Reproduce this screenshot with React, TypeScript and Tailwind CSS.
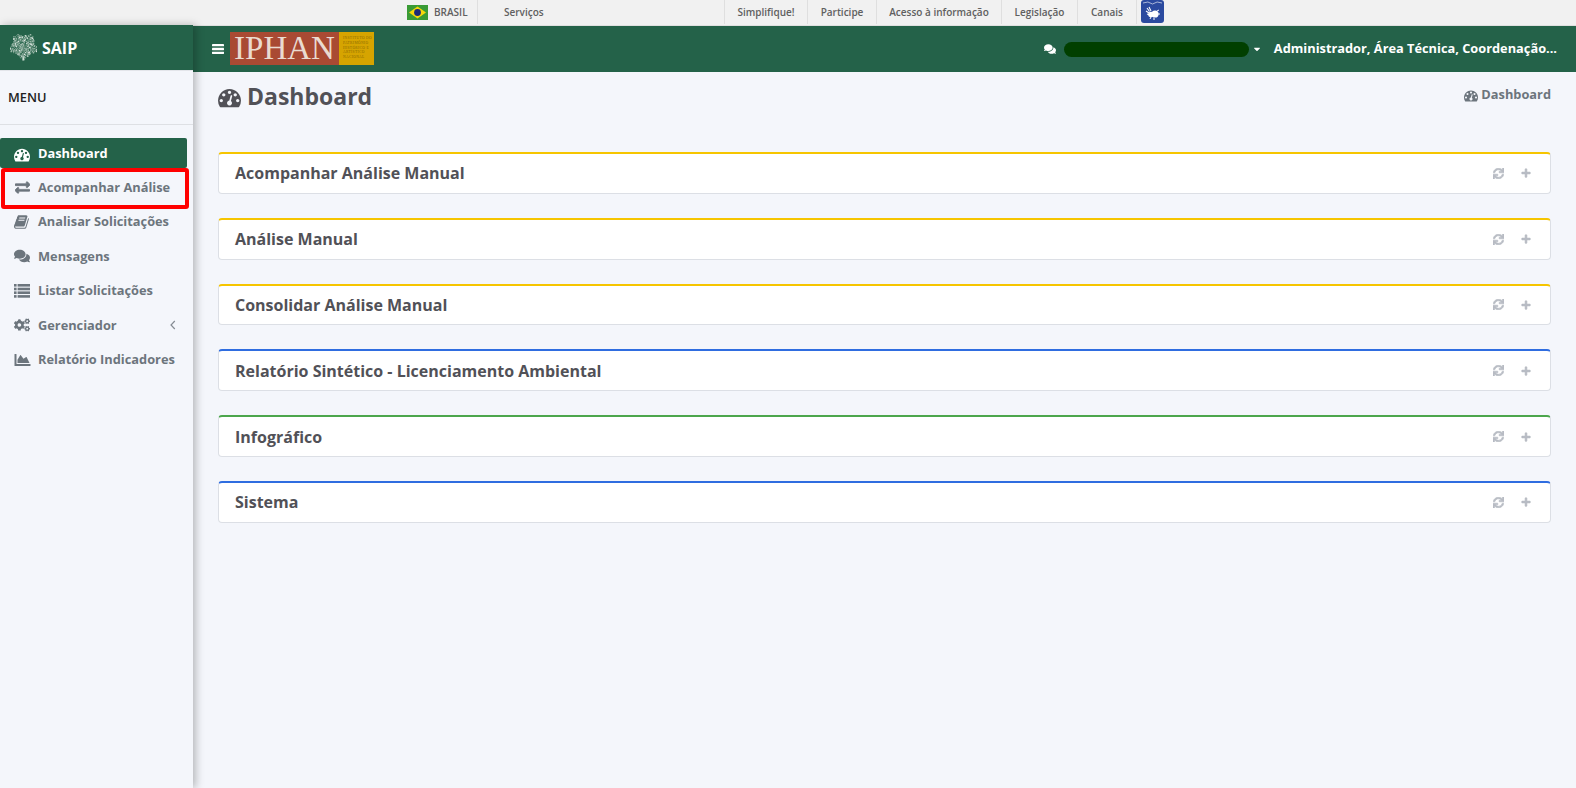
import { FaExchangeAlt, FaComments, FaCogs, FaChartArea, FaSync, FaPlus, FaCaretDown } from "react-icons/fa";

const gaugePath = "M384 1216q0-53-37.5-90.5t-90.5-37.5-90.5 37.5-37.5 90.5 37.5 90.5 90.5 37.5 90.5-37.5 37.5-90.5zm192-448q0-53-37.5-90.5t-90.5-37.5-90.5 37.5-37.5 90.5 37.5 90.5 90.5 37.5 90.5-37.5 37.5-90.5zm428 481l101-382q6-26-7.5-48.5t-38.5-29.5-48 6.5-30 39.5l-101 382q-60 5-107 43.5t-63 98.5q-20 77 20 146t117 89 146-20 89-117q16-60-6-117t-72-91zm660-33q0-53-37.5-90.5t-90.5-37.5-90.5 37.5-37.5 90.5 37.5 90.5 90.5 37.5 90.5-37.5 37.5-90.5zm-640-640q0-53-37.5-90.5t-90.5-37.5-90.5 37.5-37.5 90.5 37.5 90.5 90.5 37.5 90.5-37.5 37.5-90.5zm448 192q0-53-37.5-90.5t-90.5-37.5-90.5 37.5-37.5 90.5 37.5 90.5 90.5 37.5 90.5-37.5 37.5-90.5zm320 448q0 261-141 483-19 29-54 29h-1402q-35 0-54-29-141-221-141-483 0-182 71-348t191-286 286-191 348-71 348 71 286 191 191 286 71 348z";
const bookPath = "M1639 478q40 57 18 129l-275 906q-19 64-76.5 107.5t-122.5 43.5h-923q-77 0-148.5-53.5t-99.5-131.5q-24-67-2-127 0-4 3-27t4-37q1-8-3-21.5t-3-19.5q2-11 8-21t16.5-23.5 16.5-23.5q23-38 45-91.5t30-91.5q3-10 .5-30t-.5-28q3-11 17-28t17-23q21-36 42-92t25-90q1-9-2.5-32t.5-28q4-13 22-30.5t22-22.5q19-26 42.5-84.5t27.5-96.5q1-8-3-25.5t-2-26.5q2-8 9-18t18-23 17-21q8-12 16.5-30.5t15-35 16-36 19.5-32 26.5-23.5 36-11.5 47.5 5.5l-1 3q38-9 51-9h761q74 0 114 56t18 130l-274 906q-36 119-71.5 153.5t-128.5 34.5h-869q-27 0-38 15-11 16-1 43 24 70 144 70h923q29 0 56-15.5t35-41.5l300-987q7-22 5-57 38 15 59 43zm-1064 2q-4 13 2 22.5t20 9.5h608q13 0 25.5-9.5t16.5-22.5l21-64q4-13-2-22.5t-20-9.5h-608q-13 0-25.5 9.5t-16.5 22.5zm-83 256q-4 13 2 22.5t20 9.5h608q13 0 25.5-9.5t16.5-22.5l21-64q4-13-2-22.5t-20-9.5h-608q-13 0-25.5 9.5t-16.5 22.5z";

function Gauge({ className }: { className: string }) {
  return (
    <svg viewBox="0 0 1792 1792" className={className} fill="currentColor">
      <path d={gaugePath} />
    </svg>
  );
}

function BookIcon({ className }: { className?: string }) {
  return (
    <svg viewBox="0 0 1792 1792" className={className} fill="currentColor">
      <path d={bookPath} />
    </svg>
  );
}

function ListIcon({ className }: { className?: string }) {
  return (
    <svg viewBox="0 0 16 14" className={className} fill="currentColor">
      {[0, 3.7, 7.4, 11.1].map((y) => (
        <g key={y}>
          <rect x="0" y={y} width="2.6" height="2.6" />
          <rect x="3.6" y={y} width="12.4" height="2.6" />
        </g>
      ))}
    </svg>
  );
}

function BarsIcon({ className }: { className?: string }) {
  return (
    <svg viewBox="0 0 12 10" className={className} fill="currentColor">
      <rect x="0" y="0" width="12" height="2.3" rx="0.4" />
      <rect x="0" y="3.85" width="12" height="2.3" rx="0.4" />
      <rect x="0" y="7.7" width="12" height="2.3" rx="0.4" />
    </svg>
  );
}

function AngleIcon({ className }: { className?: string }) {
  return (
    <svg viewBox="0 0 6 10" className={className} fill="none" stroke="currentColor" strokeWidth="1.2">
      <path d="M4.8 1 L1 5 L4.8 9" />
    </svg>
  );
}

function Exchange({ className }: { className?: string }) {
  return <FaExchangeAlt className={`${className} [stroke-width:25]`} />;
}
function Comments({ className }: { className?: string }) {
  return <FaComments className={className} />;
}
function Cogs({ className }: { className?: string }) {
  return <FaCogs className={className} />;
}
function Area({ className }: { className?: string }) {
  return <FaChartArea className={className} />;
}

const speckles: [number, number, number][] = Array.from({ length: 210 }, (_, i) => {
  const a = i * 2.39996;
  const wobble = 1 + 0.14 * Math.sin(a * 5);
  const r = Math.sqrt(i / 210) * 12 * wobble;
  return [13.5 + Math.cos(a) * r * 1.08, 12 + Math.sin(a) * r * 0.98, 0.45 + ((i * 7) % 5) * 0.13];
});

function TreeLogo() {
  return (
    <svg viewBox="0 0 27 27" className="h-[27px] w-[27px]">
      {speckles.map(([x, y, r], i) => (
        <circle key={i} cx={x} cy={y} r={r} fill={i % 3 === 0 ? "#eef4f0" : "#a7c1b3"} opacity={i % 4 === 0 ? 0.6 : 0.9} />
      ))}
      <path d="M12.3 26.5 L13 19 L14.4 26.5 Z" fill="#cfdfd6" />
      <path d="M13.2 22 L13.5 13 M13.3 17 L8 11 M13.4 15 L19 9" stroke="#5f8a76" strokeWidth="0.8" fill="none" />
    </svg>
  );
}

const govLinks = [
  { label: "Simplifique!", w: "w-[83px]" },
  { label: "Participe", w: "w-[69px]" },
  { label: "Acesso à informação", w: "w-[125px]" },
  { label: "Legislação", w: "w-[76px]" },
  { label: "Canais", w: "w-[59px]" },
];

const nav = [
  { label: "Acompanhar Análise", Icon: Exchange, size: "h-[15px] w-[15px]" },
  { label: "Analisar Solicitações", Icon: BookIcon, size: "h-[16px] w-[16px]" },
  { label: "Mensagens", Icon: Comments, size: "h-[16px] w-[16px]" },
  { label: "Listar Solicitações", Icon: ListIcon, size: "h-[14px] w-[16px]" },
  { label: "Gerenciador", Icon: Cogs, size: "h-[16px] w-[16px]", arrow: true },
  { label: "Relatório Indicadores", Icon: Area, size: "h-[16px] w-[17px]" },
];

const cards = [
  { title: "Acompanhar Análise Manual", color: "border-t-[#f6c500]" },
  { title: "Análise Manual", color: "border-t-[#f6c500]" },
  { title: "Consolidar Análise Manual", color: "border-t-[#f6c500]" },
  { title: "Relatório Sintético - Licenciamento Ambiental", color: "border-t-[#2f6de0]" },
  { title: "Infográfico", color: "border-t-[#4ca64c]" },
  { title: "Sistema", color: "border-t-[#2f6de0]" },
];

export default function App() {
  return (
    <div className="relative h-[788px] w-[1576px] overflow-hidden bg-[#f4f6fb] font-['Open_Sans',sans-serif]">
      {/* Government bar */}
      <div className="flex h-[26px] items-start border-b border-[#e0e0e0] bg-[#f1f1f1] pl-[407px] text-[10px] font-semibold text-[#606060]">
        <div className="flex h-6 w-[71px] items-center gap-[6px] border-r border-[#dfdfdf]">
          <svg viewBox="0 0 21 15" className="h-[15px] w-[21px]">
            <rect width="21" height="15" fill="#3a9b35" />
            <polygon points="10.5,1.5 19,7.5 10.5,13.5 2,7.5" fill="#f7d80a" />
            <circle cx="10.5" cy="7.5" r="3.4" fill="#1d2a78" />
          </svg>
          <span>BRASIL</span>
        </div>
        <div className="flex h-6 w-[247px] items-center border-r border-[#dfdfdf] pl-[26px]">Serviços</div>
        {govLinks.map((l) => (
          <div key={l.label} className={`flex h-6 items-center justify-center border-r border-[#dfdfdf] ${l.w}`}>
            {l.label}
          </div>
        ))}
        <div className="ml-1 flex h-[23px] w-[23px] items-center justify-center rounded-[3px] bg-[#2b4a9f]">
          <svg viewBox="0 0 23 23" className="h-[23px] w-[23px]" fill="none" stroke="#fff">
            <path d="M2 3 Q7 0.5 11.5 4 Q16 0.5 21 3" strokeWidth="0.6" />
            <path d="M6 8 l2.5 3.5 M8 7 l2 4 M5 11 l3 2 M6 14 l3 1" strokeWidth="1.1" />
            <circle cx="14" cy="14" r="3.6" fill="#fff" stroke="none" />
            <circle cx="10" cy="14.5" r="2.8" fill="#fff" stroke="none" />
            <path d="M16 11 l2 -1 M17 14 l2 0 M13 18 l0 2 M10 17 l-1 2" strokeWidth="1" />
          </svg>
        </div>
      </div>

      <div className="flex">
        {/* Sidebar */}
        <aside className="relative z-10 -mt-px h-[763px] w-[193px] shrink-0 bg-[#f4f6fb] shadow-[3px_0_8px_rgba(0,0,0,0.25)]">
          <div className="flex h-[46px] items-center gap-[5px] border-b border-[#e3e5ea] bg-[#246249] pl-[10px] text-white">
            <TreeLogo />
            <span className="text-[16px] font-bold">SAIP</span>
          </div>
          <div className="flex h-[54px] items-center border-b border-[#dee0e4] pl-2 text-[12.8px] font-semibold text-[#222]">MENU</div>
          <nav className="pt-[13px]">
            <div className="mr-[6px] flex h-[30px] items-center rounded-[2px] bg-[#246249] pl-[14px] pt-[1px] text-[12.8px] font-bold text-white">
              <Gauge className="mr-2 h-[16px] w-[16px]" />
              Dashboard
            </div>
            <div className="pt-[2.5px]">
              {nav.map(({ label, Icon, size, arrow }) => (
                <div key={label} className="relative flex h-[34.4px] items-center pl-[14px] text-[12.8px] font-bold text-[#6c757d]">
                  <span className="mr-[8px] flex w-[16px] justify-center">
                    <Icon className={`shrink-0 ${size}`} />
                  </span>
                  <span>{label}</span>
                  {arrow && <AngleIcon className="absolute right-[17px] top-[12px] h-[10px] w-[6px] text-[#868c94]" />}
                </div>
              ))}
            </div>
          </nav>
          <div className="absolute left-[1px] top-[143px] h-[41px] w-[188px] rounded-[3px] border-[4px] border-[#ff0000]" />
        </aside>

        <div className="min-w-0 flex-1">
          {/* Navbar */}
          <header className="flex h-[46px] items-center bg-[#246249] text-white">
            <BarsIcon className="ml-[19px] h-[10px] w-[12px]" />
            <div className="ml-[6px] flex h-[33px] w-[144px] -translate-y-[1px]">
              <div className="flex w-[109px] items-center justify-center bg-[#a94a33] font-['Liberation_Serif',serif] text-[33px] leading-none text-[#eadbd0]">IPHAN</div>
              <div className="flex w-[35px] flex-col justify-center bg-[#d6a400] pl-[4px] font-['Liberation_Serif',serif] text-[3.6px] uppercase leading-[4.8px] tracking-[0.35px] text-[#8a6a00]">
                <span>Instituto do</span>
                <span>Patrimônio</span>
                <span>Histórico e</span>
                <span>Artístico</span>
                <span>Nacional</span>
              </div>
            </div>
            <div className="ml-auto flex items-center">
              <FaComments className="text-[12px]" />
              <div className="ml-[8px] h-[15px] w-[185px] rounded-full bg-[#013f00]" />
              <FaCaretDown className="ml-[3px] text-[10px]" />
              <span className="ml-[12px] mr-[19px] text-[12.8px] font-bold">Administrador, Área Técnica, Coordenação...</span>
            </div>
          </header>

          {/* Content */}
          <main className="pl-[25px] pr-[25px]">
            <div className="flex h-[80px] items-start justify-between pt-[8px]">
              <h1 className="flex items-center text-[23px] font-bold leading-[32px] text-[#515157]">
                <Gauge className="mr-[6px] h-[23px] w-[23px]" />
                Dashboard
              </h1>
              <div className="flex items-center pt-[5px] text-[12.8px] font-bold text-[#6c757d]">
                <Gauge className="mr-[3px] h-[14px] w-[14px]" />
                Dashboard
              </div>
            </div>
            {cards.map((c) => (
              <section
                key={c.title}
                className={`mb-[24px] flex h-[41.8px] items-center justify-between rounded-[4px] border border-t-2 border-[#dcdfe5] bg-white pl-[16px] pr-[19px] ${c.color}`}
              >
                <h2 className="text-[16px] font-bold text-[#515157]">{c.title}</h2>
                <div className="flex items-center gap-[17px] text-[#b8bcc4]">
                  <FaSync className="h-[11px] w-[11px] [stroke-width:30]" />
                  <FaPlus className="h-[10px] w-[10px] [stroke-width:30]" />
                </div>
              </section>
            ))}
          </main>
        </div>
      </div>
    </div>
  );
}
